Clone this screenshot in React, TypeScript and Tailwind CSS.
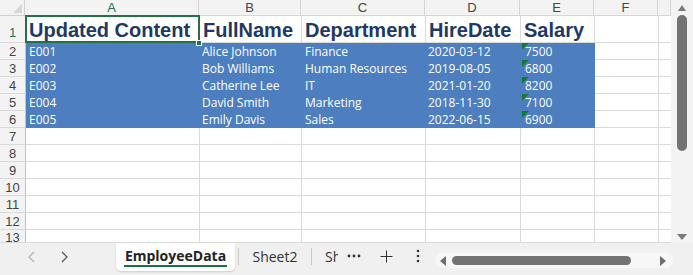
import React from "react";

const cols = ["A", "B", "C", "D", "E", "F", ""];
const headers = ["Updated Content", "FullName", "Department", "HireDate", "Salary"];
const data = [
  ["E001", "Alice Johnson", "Finance", "2020-03-12", "7500"],
  ["E002", "Bob Williams", "Human Resources", "2019-08-05", "6800"],
  ["E003", "Catherine Lee", "IT", "2021-01-20", "8200"],
  ["E004", "David Smith", "Marketing", "2018-11-30", "7100"],
  ["E005", "Emily Davis", "Sales", "2022-06-15", "6900"],
];

const rowHeights = ["h-[27px]", "h-[17px]", "h-[17px]", "h-[17px]", "h-[17px]", "h-[17px]", "h-[17px]", "h-[17px]", "h-[17px]", "h-[17px]", "h-[17px]", "h-[17px]", "h-[13px]"];
const colW = ["w-[174px]", "w-[102px]", "w-[124px]", "w-[95px]", "w-[74px]", "w-[64px]", "w-[13px]"];
const padL = ["pl-[3px]", "pl-[2px]", "pl-[3px]", "pl-[2px]", "pl-[4px]"];

const hdrFont = { fontFamily: '"Liberation Sans", Arial, sans-serif' };
const dataFont = { fontFamily: '"Open Sans", "Noto Sans", sans-serif' };

function Grid() {
  return (
    <div className="relative flex flex-col w-[671px] h-[243px] overflow-hidden bg-white">
      <div className="flex h-[16px] shrink-0">
        <div className="relative w-[26px] h-[16px] bg-[#f3f3f3] border-r border-b border-[#d0d0d0] box-border">
          <div className="absolute right-[2px] bottom-[2px] w-0 h-0 border-l-[9px] border-l-transparent border-b-[9px] border-b-[#d6d6d6]" />
        </div>
        {cols.map((c, i) => (
          <div
            key={i}
            className={`${colW[i]} h-[16px] shrink-0 box-border border-r border-b border-[#d6d6d6] bg-[#f3f3f3] flex items-center justify-center text-[13px] leading-none ${i === 0 ? "text-[#217346]" : "text-[#444]"}`}
            style={hdrFont}
          >
            {c}
          </div>
        ))}
      </div>
      {rowHeights.map((h, r) => {
        const rowNum = r + 1;
        const isData = rowNum >= 2 && rowNum <= 6;
        return (
          <div key={r} className={`flex ${h} shrink-0`}>
            <div
              className={`w-[26px] ${h} shrink-0 box-border overflow-hidden border-r border-r-[#c4c4c4] border-b border-b-[#dadada] bg-[#f3f3f3] flex ${rowNum === 1 ? "items-end pb-[3px]" : rowNum === 13 ? "items-start pt-[1px]" : "items-center"} justify-center text-[13px] leading-none ${rowNum === 1 ? "text-[#217346]" : "text-[#444]"}`}
              style={hdrFont}
            >
              {rowNum}
            </div>
            {cols.map((_, c) => {
              const blue = isData && c < 5;
              let content: React.ReactNode = null;
              if (rowNum === 1 && c < 5) {
                content = (
                  <span className="text-[20px] font-bold text-[#1f3864] leading-none whitespace-nowrap pl-[3px] pb-[2px]" style={hdrFont}>
                    {headers[c]}
                  </span>
                );
              } else if (isData && c < 5) {
                content = (
                  <span className={`text-[12px] text-white leading-none whitespace-nowrap ${padL[c]} pb-[1px]`} style={dataFont}>
                    {data[rowNum - 2][c]}
                  </span>
                );
              }
              return (
                <div
                  key={c}
                  className={`relative ${colW[c]} ${h} shrink-0 box-border border-r border-b flex items-end overflow-visible ${blue ? "bg-[#4d7ebf] border-[#4d7ebf]" : "border-[#dadada]"}`}
                >
                  {content}
                  {isData && c === 4 && (
                    <svg className="absolute left-[1px] top-0" width="7" height="7" viewBox="0 0 7 7">
                      <polygon points="0,0 7,0 0,7" fill="#137a35" />
                    </svg>
                  )}
                </div>
              );
            })}
          </div>
        );
      })}
      <div className="absolute left-[25px] top-[15px] w-[175px] h-[28px] border-2 border-[#217346] pointer-events-none" />
      <div className="absolute left-[196px] top-[40px] w-[6px] h-[6px] bg-[#217346] border border-white" />
    </div>
  );
}

function VScroll() {
  return (
    <div className="w-[22px] h-[243px] bg-[#f3f3f3] flex flex-col items-center">
      <div className="mt-[5px] w-0 h-0 border-l-[4px] border-l-transparent border-r-[4px] border-r-transparent border-b-[6px] border-b-[#7a7a7a]" />
      <div className="mt-[4px] w-[10px] h-[136px] rounded-full bg-[#737373]" />
      <div className="flex-1" />
      <div className="mb-[3px] w-0 h-0 border-l-[5px] border-l-transparent border-r-[5px] border-r-transparent border-t-[6px] border-t-[#7a7a7a]" />
    </div>
  );
}

function BottomBar() {
  const f = { fontFamily: '"Open Sans", "Noto Sans", sans-serif' };
  return (
    <div className="h-[32px] bg-[#f0f0f0] flex items-start" style={f}>
      <div className="w-[116px] h-[28px] flex items-center">
        <svg className="ml-[27px]" width="10" height="12" viewBox="0 0 10 12">
          <path d="M7 1 L2 6 L7 11" fill="none" stroke="#b0b0b0" strokeWidth="1.2" />
        </svg>
        <svg className="ml-[22px]" width="10" height="12" viewBox="0 0 10 12">
          <path d="M3 1 L8 6 L3 11" fill="none" stroke="#555" strokeWidth="1.2" />
        </svg>
      </div>
      <div className="relative w-[119px] h-[28px] bg-white rounded-b-[5px] shadow-[0_1px_2px_rgba(0,0,0,0.15)] flex flex-col items-center justify-center">
        <span className="text-[14px] font-bold text-[#222] leading-none mt-[-2px]">EmployeeData</span>
        <div className="absolute bottom-[4px] left-[8px] right-[8px] h-[2px] bg-[#1e7145]" />
      </div>
      <div className="w-px h-[17px] bg-[#c8c8c8] mt-[5px] ml-[3px]" />
      <div className="w-[72px] h-[26px] flex items-center justify-center text-[14px] text-[#333]">Sheet2</div>
      <div className="w-px h-[17px] bg-[#c8c8c8] mt-[5px]" />
      <div className="w-[26px] h-[26px] overflow-hidden flex items-center pl-[13px] text-[14px] text-[#333]">
        <span className="whitespace-nowrap">Sh</span>
      </div>
      <div className="w-[24px] ml-[4px] h-[26px] flex items-center justify-center">
        <svg width="14" height="4" viewBox="0 0 14 4">
          <circle cx="2" cy="2" r="1.4" fill="#333" />
          <circle cx="7" cy="2" r="1.4" fill="#333" />
          <circle cx="12" cy="2" r="1.4" fill="#333" />
        </svg>
      </div>
      <div className="w-[26px] ml-[7px] h-[26px] flex items-center justify-center">
        <svg width="13" height="13" viewBox="0 0 13 13">
          <path d="M6.5 0.5 V12.5 M0.5 6.5 H12.5" stroke="#333" strokeWidth="1" />
        </svg>
      </div>
      <div className="w-[20px] ml-[9px] h-[26px] flex items-center justify-center">
        <svg width="4" height="14" viewBox="0 0 4 14">
          <circle cx="2" cy="2" r="1.3" fill="#333" />
          <circle cx="2" cy="7" r="1.3" fill="#333" />
          <circle cx="2" cy="12" r="1.3" fill="#333" />
        </svg>
      </div>
      <div className="ml-[7px] mt-[10px] w-[238px] h-[15px] rounded-full bg-[#f7f7f7] flex items-center px-[5px]">
        <div className="w-0 h-0 border-t-[5px] border-t-transparent border-b-[5px] border-b-transparent border-r-[6px] border-r-[#6e6e6e]" />
        <div className="ml-[6px] w-[179px] h-[9px] rounded-full bg-[#737373]" />
        <div className="flex-1" />
        <div className="mr-[2px] w-0 h-0 border-t-[5px] border-t-transparent border-b-[5px] border-b-transparent border-l-[6px] border-l-[#6e6e6e]" />
      </div>
    </div>
  );
}

export default function App() {
  return (
    <div className="w-[693px] h-[275px] overflow-hidden bg-[#f0f0f0] flex flex-col">
      <div className="flex h-[243px]">
        <Grid />
        <VScroll />
      </div>
      <BottomBar />
    </div>
  );
}
